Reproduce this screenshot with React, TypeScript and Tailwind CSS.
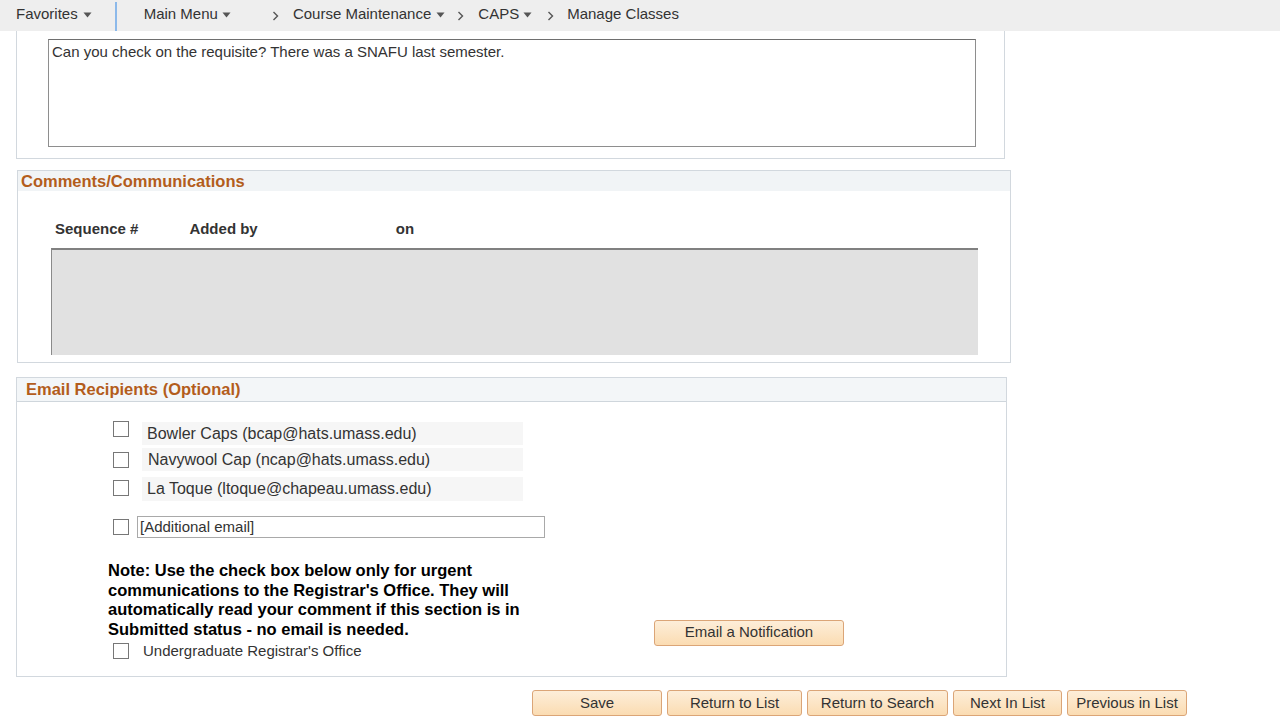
import React from "react";

const font = { fontFamily: '"Liberation Sans", Arial, sans-serif' };

function Caret() {
  return (
    <svg width="9" height="6" viewBox="0 0 9 6" className="mt-[1px]">
      <path d="M0.5 0.5 L8.5 0.5 L4.5 5.5 Z" fill="#555" />
    </svg>
  );
}

function Chevron() {
  return (
    <svg width="8" height="12" viewBox="0 0 8 12">
      <path d="M1.5 2 L5.5 6 L1.5 10" fill="none" stroke="#555" strokeWidth="1.4" />
    </svg>
  );
}

function Box() {
  return <span className="block w-[16px] h-[16px] border border-[#777] bg-white shrink-0" />;
}

function Btn({ label, w }: { label: string; w: string }) {
  return (
    <button
      className={`${w} h-[26px] pb-[2px] rounded-[3px] border border-[#dba577] bg-linear-to-b from-[#fdeed9] to-[#fbdcb2] text-[15px] text-[#333] leading-none`}
    >
      {label}
    </button>
  );
}

export default function App() {
  return (
    <div className="w-[1280px] h-[720px] overflow-hidden bg-white text-[#333]" style={font}>
      {/* nav */}
      <div className="h-[31px] bg-[#eeeeee] flex items-center text-[15px] text-[#333]">
        <div className="ml-[16px] flex items-center pb-[2px]">Favorites<span className="ml-[5px]"><Caret /></span></div>
        <div className="ml-[23px] w-[2px] h-[29px] mt-[2px] self-start bg-[#8cb9ea]" />
        <div className="ml-[27px] flex items-center pb-[2px]">Main Menu<span className="ml-[4px]"><Caret /></span></div>
        <div className="ml-[41px] flex items-center"><Chevron /></div>
        <div className="ml-[13px] flex items-center pb-[2px]">Course Maintenance<span className="ml-[5px]"><Caret /></span></div>
        <div className="ml-[12px] flex items-center"><Chevron /></div>
        <div className="ml-[13px] flex items-center pb-[2px]">CAPS<span className="ml-[4px]"><Caret /></span></div>
        <div className="ml-[15px] flex items-center"><Chevron /></div>
        <div className="ml-[12px] pb-[2px]">Manage Classes</div>
      </div>

      {/* box 1 */}
      <div className="ml-[16px] w-[989px] h-[128px] border border-t-0 border-[#d2d8de] pt-[8px]">
        <div className="ml-[31px] w-[928px] h-[108px] border border-[#8e8e8e] border-t-[#6f6f6f] px-[3px] pt-[1px] text-[15px] text-[#333]">
          Can you check on the requisite? There was a SNAFU last semester.
        </div>
      </div>

      {/* box 2 */}
      <div className="mt-[11px] ml-[17px] w-[994px] h-[193px] border border-[#d2d8de]">
        <div className="h-[20px] bg-[#f1f4f6] pl-[3px] flex items-center text-[16.5px] font-bold text-[#b35d1c]">
          Comments/Communications
        </div>
        <div className="h-[29px]" />
        <div className="flex text-[15px] font-bold text-[#333] h-[18px] items-center">
          <span className="ml-[37px]">Sequence #</span>
          <span className="ml-[51px]">Added by</span>
          <span className="ml-[138px]">on</span>
        </div>
        <div className="h-[10px]" />
        <div className="ml-[33px] w-[927px] h-[107px] bg-[#e1e1e1] border-t-2 border-l border-t-[#808080] border-l-[#8a8a8a]" />
      </div>

      {/* box 3 */}
      <div className="mt-[14px] ml-[16px] w-[991px] h-[300px] border border-[#d2d8de]">
        <div className="h-[24px] bg-[#f3f6f8] border-b border-[#cfd6dc] pl-[9px] flex items-center text-[16.5px] font-bold text-[#b35d1c]">
          Email Recipients (Optional)
        </div>
        <div className="pl-[96px]">
          <div className="mt-[19px] flex items-start">
            <Box />
            <div className="ml-[13px] mt-[1px] w-[381px] h-[23px] bg-[#f6f6f6] pl-[5px] flex items-center text-[16px] text-[#333]">
              Bowler Caps (bcap@hats.umass.edu)
            </div>
          </div>
          <div className="mt-[3px] flex items-start">
            <div className="mt-[4px]"><Box /></div>
            <div className="ml-[13px] w-[381px] h-[23px] bg-[#f6f6f6] pl-[6px] flex items-center text-[16px] text-[#333]">
              Navywool Cap (ncap@hats.umass.edu)
            </div>
          </div>
          <div className="mt-[6px] flex items-start">
            <div className="mt-[3px]"><Box /></div>
            <div className="ml-[13px] w-[381px] h-[24px] bg-[#f6f6f6] pl-[5px] flex items-center text-[16px] text-[#333]">
              La Toque (ltoque@chapeau.umass.edu)
            </div>
          </div>
          <div className="mt-[15px] flex items-center">
            <Box />
            <div className="ml-[8px] w-[408px] h-[22px] border border-[#a9a9a9] pl-[2px] flex items-center text-[15px] text-[#333]">
              [Additional email]
            </div>
          </div>
        </div>
        <div className="mt-[23px] flex items-end">
          <div className="ml-[91px] w-[440px]">
            <div className="text-[16.5px] font-bold text-black leading-[19.5px] whitespace-nowrap">
              Note: Use the check box below only for urgent<br />
              communications to the Registrar's Office. They will<br />
              automatically read your comment if this section is in<br />
              Submitted status - no email is needed.
            </div>
            <div className="mt-[1px] ml-[5px] flex items-center">
              <Box />
              <span className="ml-[14px] text-[15px] text-[#333]">Undergraduate Registrar's Office</span>
            </div>
          </div>
          <div className="ml-[106px] mb-[17px]">
            <Btn label="Email a Notification" w="w-[190px]" />
          </div>
        </div>
      </div>

      {/* bottom buttons */}
      <div className="mt-[13px] ml-[532px] flex gap-[5px]">
        <Btn label="Save" w="w-[130px]" />
        <Btn label="Return to List" w="w-[135px]" />
        <Btn label="Return to Search" w="w-[141px]" />
        <Btn label="Next In List" w="w-[109px]" />
        <Btn label="Previous in List" w="w-[120px]" />
      </div>
    </div>
  );
}
